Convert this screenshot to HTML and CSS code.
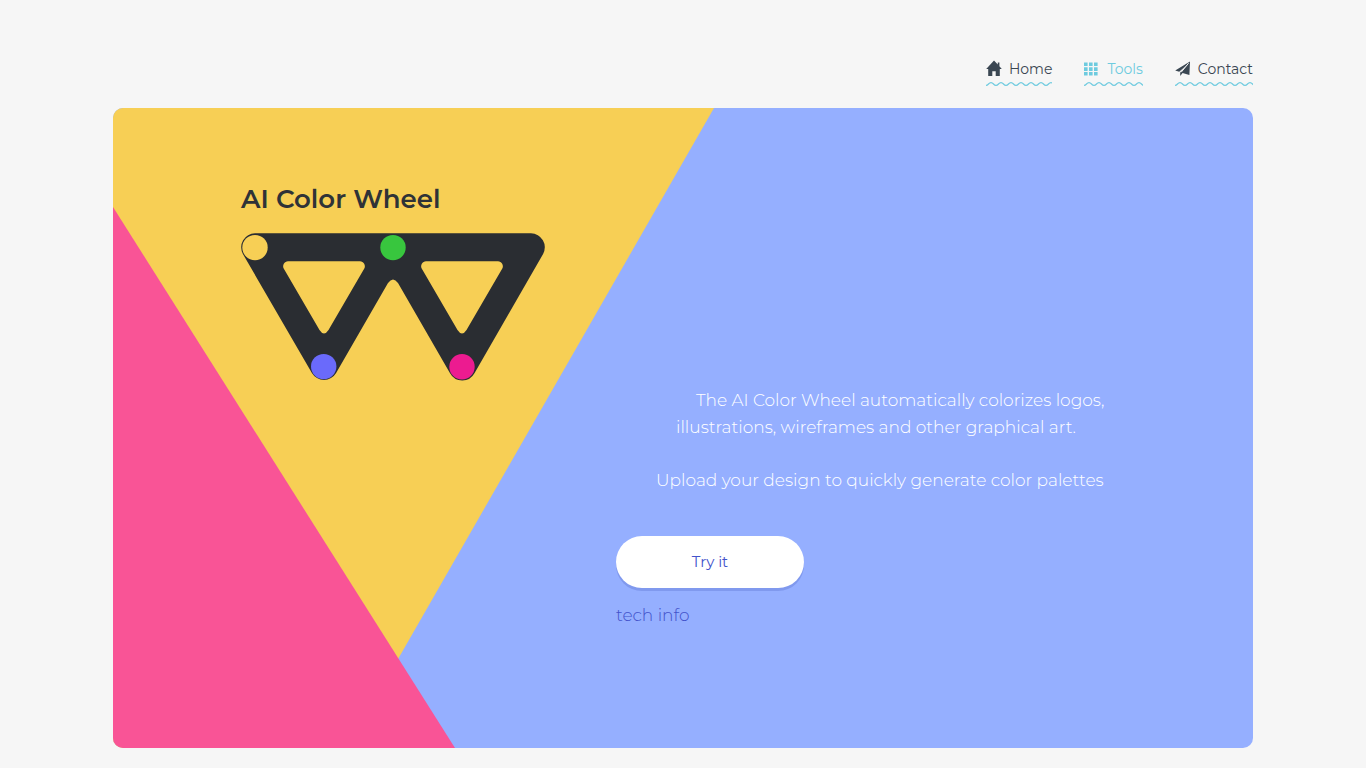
FILE: index.html
```html
<!DOCTYPE html>
<html lang="en">
<head>
  <meta charset="UTF-8">
  <meta name="viewport" content="width=device-width, initial-scale=1.0">
  <title>AI Color Wheel</title>
  <link rel="stylesheet" href="styles.css">
</head>

<body>
  <div class="container">
    <!-- ===== NAVIGATION ===== -->
    <nav class="main-nav">
      <a href="#home" class="nav-link">
        <svg class="nav-icon" viewBox="0 1 16 16" aria-hidden="true"><path d="M8 0.6L0.2 8.9H2.2V16H6.3V11.2H9.7V16H13.8V8.9H15.8L13.4 6.3V2.6H11.8V4.6Z"/></svg>
        <span>Home</span>
      </a>
      <a href="#tools" class="nav-link active">
        <svg class="nav-icon" viewBox="0 1 16 16" aria-hidden="true"><path d="M0 2.5h3.6v3.6H0zM5 2.5h3.6v3.6H5zM10 2.5h3.6v3.6H10zM0 7.3h3.6v3.6H0zM5 7.3h3.6v3.6H5zM10 7.3h3.6v3.6H10zM0 12h3.6v3.6H0zM5 12h3.6v3.6H5zM10 12h3.6v3.6H10z"/></svg>
        <span>Tools</span>
      </a>
      <a href="#contact" class="nav-link">
        <svg class="nav-icon" viewBox="0 1 16 16" aria-hidden="true"><path d="M15 1.5L0.2 10.5L4.2 11.8L13 4L5.2 12.6V16L7.6 13L14.4 15Z"/><path d="M13.6 3.2L6.2 12.2" fill="none" stroke="#f6f6f6"/></svg>
        <span>Contact</span>
      </a>
    </nav>

    <!-- ===== HERO ===== -->
    <main class="hero">
      <h1>AI Color Wheel</h1>
      <svg class="logo" viewBox="0 0 304 148" role="img" aria-label="W logo">
        <path fill="#2a2d32" fill-rule="evenodd" d="M14 0.3H290A14 14 0 0 1 302.1 21L233.6 140A14 14 0 0 1 208.9 140L157 50Q152 43 147 50L95.1 140A14 14 0 0 1 70.9 140L1.9 21A14 14 0 0 1 14 0.3Z
          M47 28.3H119A5 5 0 0 1 123.3 35.6L87.5 97Q83 104 78.5 97L42.7 35.6A5 5 0 0 1 47 28.3Z
          M185 28.3H257A5 5 0 0 1 261.3 35.6L225.5 97Q221 104 216.5 97L180.7 35.6A5 5 0 0 1 185 28.3Z"/>
        <circle cx="14" cy="14.6" r="12.7" fill="#f7cf55"/>
        <circle cx="152" cy="14.6" r="12.7" fill="#38c63e"/>
        <circle cx="82.7" cy="133.6" r="12.7" fill="#6a6afb"/>
        <circle cx="221" cy="133.8" r="12.7" fill="#ec1b90"/>
      </svg>

      <div class="intro">
        <p>
          <span class="step-3">The AI Color Wheel automatically colorizes logos,</span>
          <span class="step-2">illustrations, wireframes and other graphical art.</span>
        </p>
        <p>
          <span class="step-1">Upload your design to quickly generate color palettes</span>
        </p>
        <button type="button" class="try-button">Try it</button>
        <a href="#tech-info" class="tech-link">tech info</a>
      </div>
    </main>
  </div>
</body>
</html>
```

FILE: styles.css
```css
* { box-sizing: border-box; }

body {
  margin: 0;
  background: #f6f6f6;
  color: #3a4652;
  font-family: Montserrat, Inter, "Open Sans", sans-serif;
  font-size: 17px;
  font-weight: 300;
  line-height: 27px;
}

.container {
  max-width: 1180px;
  margin: 0 auto;
  padding: 54px 20px 20px;
}

/* ---------------- Navigation ---------------- */
.main-nav {
  display: flex;
  justify-content: flex-end;
  gap: 32px;
  margin-bottom: 22px;
}

.nav-link {
  display: flex;
  align-items: center;
  gap: 7px;
  height: 32px;
  padding-bottom: 2px;
  color: inherit;
  font-size: 14px;
  font-weight: 400;
  text-decoration: none;
  /* wavy underline */
  background: url("data:image/svg+xml,%3Csvg xmlns='http://www.w3.org/2000/svg' viewBox='0 0 10 4'%3E%3Cpath fill='none' stroke='%2370cbe0' stroke-width='1.2' d='M-5 .6C-2.5 .6-2.5 3.4 0 3.4S2.5 .6 5 .6S7.5 3.4 10 3.4S12.5 .6 15 .6'/%3E%3C/svg%3E") 0 100% / 10px 4px repeat-x;
}
.nav-link.active,
.nav-link:hover { color: #6ecbdf; }

.nav-icon { width: 16px; height: 16px; fill: currentColor; overflow: visible; }

/* ---------------- Hero ---------------- */
.hero {
  position: relative;
  z-index: 0;
  min-height: calc(100vh - 128px);
  padding: 76px 128px 116px;
  border-radius: 10px;
  background: #95afff;
  overflow: hidden;
}

/* yellow and pink panels behind the content */
.hero::before,
.hero::after {
  content: "";
  position: absolute;
  inset: 0;
  z-index: -1;
}
.hero::before {
  background: #f7cf55;
  clip-path: polygon(0 0, 601px 0, 234px 640px, 0 640px);
}
.hero::after {
  background: #f95496;
  clip-path: polygon(0 99px, 342px 640px, 0 640px);
}

h1 {
  margin: 0 0 19px;
  color: #2f3337;
  font-size: 26px;
  font-weight: 600;
  line-height: 30px;
}

.logo { display: block; width: 304px; height: 148px; }

/* ---------------- Intro text ---------------- */
.intro {
  display: flex;
  flex-direction: column;
  align-items: flex-start;
  margin: 6px 0 0 375px;
  color: #fff;
}
.intro p { margin: 0 0 26px; }
.intro span { display: block; white-space: nowrap; }

/* each line starts further left, along the slanted edge */
.step-1 { padding-left: 40px; }
.step-2 { padding-left: 60px; }
.step-3 { padding-left: 80px; }

.try-button {
  width: 188px;
  height: 52px;
  margin: 16px 0 14px;
  padding: 0 0 2px;
  border: none;
  border-radius: 26px;
  background: #fff;
  box-shadow: 0 3px 0 #8099ee;
  color: #4353cb;
  font: inherit;
  font-size: 15px;
  font-weight: 400;
  cursor: pointer;
}

.tech-link { color: #4353cb; text-decoration: none; }
```
